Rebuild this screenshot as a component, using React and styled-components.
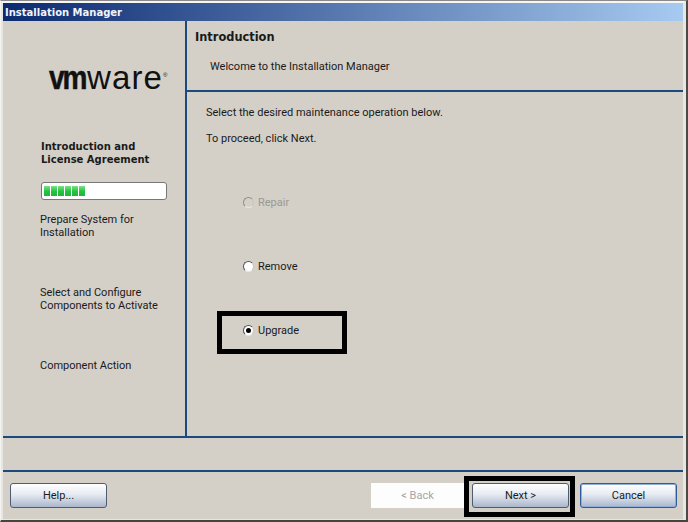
import React from 'react';
import styled, { createGlobalStyle } from 'styled-components';

const GlobalStyle = createGlobalStyle`
  html, body { margin: 0; padding: 0; background: #d4d0c8; }
  * { box-sizing: border-box; }
`;

const Frame = styled.div`
  width: 688px;
  height: 522px;
  overflow: hidden;
  background: #d4d0c8;
  border-top: 1px solid #8a8a8a;
  border-left: 1px solid #f4f3ef;
  border-right: 2px solid #4a4a46;
  border-bottom: 2px solid #45453f;
  font-family: Roboto, Tahoma, sans-serif;
  font-size: 11px;
  color: #1a1a1a;
`;

const Inner = styled.div`
  height: 100%;
  display: flex;
  flex-direction: column;
  border-top: 2px solid #f6f6f4;
  border-left: 2px solid #e8e6e0;
  border-right: 3px solid #e8e6e0;
  border-bottom: 1px solid #e8e6e0;
`;

const TitleBar = styled.div`
  height: 18px;
  flex: none;
  padding-left: 2px;
  display: flex;
  align-items: center;
  font-family: "DejaVu Sans", Tahoma, sans-serif;
  font-weight: bold;
  font-size: 10px;
  color: #f2f4fa;
  background: linear-gradient(to right, #0b2a70, #a6caf0);
`;

const Main = styled.div`
  height: 415px;
  flex: none;
  display: flex;
`;

const Sidebar = styled.div`
  width: 184px;
  flex: none;
  border-right: 2px solid #1c4a7e;
  padding: 40px 0 0 37px;
`;

const Logo = styled.div`
  margin-left: 9px;
  height: 34px;
  display: flex;
  align-items: baseline;
  font-family: "Liberation Sans", Arial, sans-serif;
  font-size: 33px;
  line-height: 34px;
  color: #111;
`;

const LogoStrong = styled.span`
  display: inline-block;
  font-weight: bold;
  letter-spacing: -2.5px;
  margin-right: -4.7px;
  transform: scaleX(0.85);
  transform-origin: left center;
  -webkit-text-stroke: 0.5px #111;
`;

const LogoLight = styled.span`
  letter-spacing: 1.1px;
`;

const LogoMark = styled.span`
  font-size: 6px;
  align-self: center;
  margin-top: -6px;
`;

const Step = styled.div`
  width: 135px;
  line-height: 13px;
  margin-top: ${(p) => p.$top}px;
`;

const ActiveStep = styled(Step)`
  margin-left: 1px;
  font-family: "DejaVu Sans", Tahoma, sans-serif;
  font-size: 10px;
  font-weight: bold;
`;

const Progress = styled.div`
  width: 126px;
  height: 18px;
  margin: 16px 0 0 1px;
  padding: 3px 2px;
  display: flex;
  gap: 1px;
  background: #fff;
  border: 1px solid #777;
  border-radius: 3px;
`;

const Block = styled.div`
  width: 6px;
  background: linear-gradient(to bottom, #7fe08a, #1fc53c 55%, #29b044);
`;

const Content = styled.div`
  flex: 1;
  display: flex;
  flex-direction: column;
`;

const Header = styled.div`
  height: 71px;
  flex: none;
  padding: 9px 0 0 8px;
  border-bottom: 2px solid #1c4a7e;
`;

const Heading = styled.div`
  font-family: "DejaVu Sans", Tahoma, sans-serif;
  font-weight: bold;
  font-size: 11.4px;
  line-height: 15px;
`;

const Subheading = styled.div`
  margin: 15px 0 0 15px;
  line-height: 14px;
`;

const Body = styled.div`
  flex: 1;
  padding: 14px 0 0 19px;
`;

const Line = styled.div`
  line-height: 13px;
  margin-bottom: 13px;
`;

const Options = styled.div`
  margin: 51px 0 0 37px;
  display: flex;
  flex-direction: column;
  gap: 51px;
`;

const Option = styled.label`
  position: relative;
  display: flex;
  align-items: center;
  gap: 4px;
  height: 13px;
  color: ${(p) => (p.$disabled ? '#9a9893' : '#1a1a1a')};
`;

const Radio = styled.span`
  width: 11px;
  height: 11px;
  flex: none;
  border-radius: 50%;
  display: flex;
  align-items: center;
  justify-content: center;
  background: ${(p) => (p.$disabled ? '#d4d0c8' : '#fff')};
  border: 1px solid ${(p) => (p.$disabled ? '#8f8d88' : '#555')};
  border-right-color: #c8c6c0;
  border-bottom-color: #e8e6e0;
  &::after {
    content: '';
    display: ${(p) => (p.$checked ? 'block' : 'none')};
    width: 5px;
    height: 5px;
    border-radius: 50%;
    background: #000;
  }
`;

const Highlight = styled.span`
  position: absolute;
  border: 5px solid #000;
  pointer-events: none;
`;

const OptionHighlight = styled(Highlight)`
  left: -26px;
  top: -13px;
  width: 130px;
  height: 43px;
`;

const Rule = styled.div`
  height: 2px;
  flex: none;
  background: #1c4a7e;
`;

const Gap = styled.div`
  height: 32px;
  flex: none;
`;

const Footer = styled.div`
  flex: 1;
  padding: 11px 6px 0 7px;
  display: flex;
`;

const FooterSpacer = styled.div`
  flex: 1;
`;

const Button = styled.div`
  position: relative;
  width: 97px;
  height: 25px;
  margin-left: ${(p) => p.$gap || 0}px;
  display: flex;
  align-items: center;
  justify-content: center;
  border-radius: 3px;
  border: 1px solid ${(p) => (p.$primary ? '#2f5a96' : '#4f5c70')};
  background: linear-gradient(to bottom, #ffffff, #e6ebf2 45%, #a9b6cc);
  box-shadow: ${(p) => (p.$primary ? 'inset 0 0 0 1px #8fb0da' : 'none')};
`;

const BackButton = styled.div`
  width: 97px;
  height: 25px;
  padding-right: 4px;
  display: flex;
  align-items: center;
  justify-content: center;
  background: #fdfdfd;
  color: #a5a5a5;
`;

const NextHighlight = styled(Highlight)`
  left: -9px;
  top: -8px;
  width: 111px;
  height: 41px;
`;

const steps = [
  { text: 'Prepare System for\nInstallation', top: 13 },
  { text: 'Select and Configure\nComponents to Activate', top: 47 },
  { text: 'Component Action', top: 47 },
];

const multiline = (text) =>
  text.split('\n').map((part) => <div key={part}>{part}</div>);

const App = () => {
  return (
    <Frame>
      <GlobalStyle />
      <Inner>
        <TitleBar>Installation Manager</TitleBar>
        <Main>
          <Sidebar>
            <Logo>
              <LogoStrong>vm</LogoStrong>
              <LogoLight>ware</LogoLight>
              <LogoMark>®</LogoMark>
            </Logo>
            <ActiveStep $top={45}>
              {multiline('Introduction and\nLicense Agreement')}
            </ActiveStep>
            <Progress>
              {[0, 1, 2, 3, 4, 5].map((i) => (
                <Block key={i} />
              ))}
            </Progress>
            {steps.map((step) => (
              <Step key={step.text} $top={step.top}>
                {multiline(step.text)}
              </Step>
            ))}
          </Sidebar>
          <Content>
            <Header>
              <Heading>Introduction</Heading>
              <Subheading>Welcome to the Installation Manager</Subheading>
            </Header>
            <Body>
              <Line>Select the desired maintenance operation below.</Line>
              <Line>To proceed, click Next.</Line>
              <Options>
                <Option $disabled>
                  <Radio $disabled />
                  Repair
                </Option>
                <Option>
                  <Radio />
                  Remove
                </Option>
                <Option>
                  <Radio $checked />
                  Upgrade
                  <OptionHighlight />
                </Option>
              </Options>
            </Body>
          </Content>
        </Main>
        <Rule />
        <Gap />
        <Rule />
        <Footer>
          <Button>Help...</Button>
          <FooterSpacer />
          <BackButton>&lt; Back</BackButton>
          <Button $gap={4}>
            Next &gt;
            <NextHighlight />
          </Button>
          <Button $gap={11} $primary>Cancel</Button>
        </Footer>
      </Inner>
    </Frame>
  );
};

export default App;
